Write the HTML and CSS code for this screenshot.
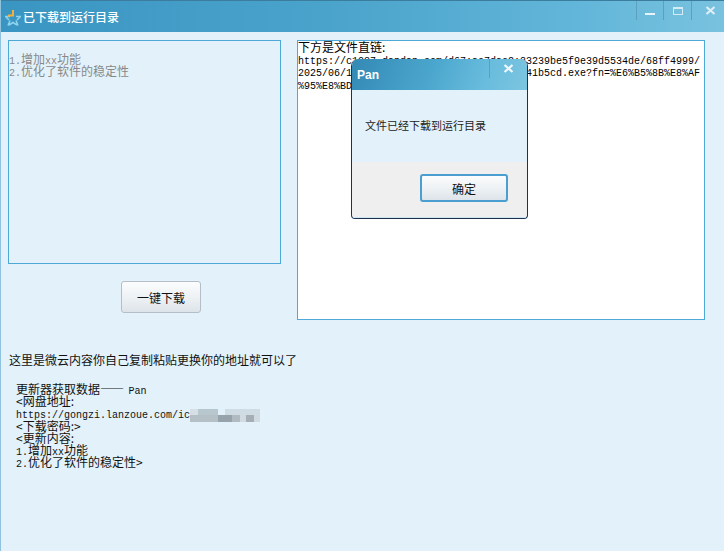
FILE: index.html
```html
<!DOCTYPE html>
<html lang="zh">
<head>
<meta charset="utf-8">
<title>已下载到运行目录</title>
<link rel="stylesheet" href="styles.css">
</head>
<body>
<div class="window">
  <header class="titlebar">
    <svg class="logo" width="18" height="18" viewBox="0 0 18 18">
      <path d="M1 7.500h5M12 7.500h5M4 16.500l2-5M14 16.500l-2-5M5 16l4-2.500 4 2.500M2 8l3 3M16 8l-3 3" fill="none" stroke="#8fd4ef" stroke-width="1.500"/>
      <path d="M9 1v5.500H4" fill="none" stroke="#f4b13a" stroke-width="2"/>
    </svg>
    <span class="title">已下载到运行目录</span>
    <div class="controls">
      <div class="ctl"><svg width="10" height="10" viewBox="0 0 10 10"><rect y="7" width="10" height="2" fill="#e8f4fa"/></svg></div>
      <div class="ctl"><svg width="10" height="8" viewBox="0 0 10 8"><rect x=".5" y=".5" width="9" height="7" fill="none" stroke="#d5ebf5"/><rect y="0" width="10" height="2" fill="#d5ebf5"/></svg></div>
      <div class="ctl ctl-close"><svg width="11" height="9" viewBox="0 0 11 9"><path d="M1.500 1l8 7M9.500 1l-8 7" stroke="#dfeef5" stroke-width="2.200"/></svg></div>
    </div>
  </header>
  <main class="content">
    <div class="top">
      <div class="left-col">
        <div class="box box-left">
          <div class="ln"><span class="a">1.</span>增加<span class="a">xx</span>功能</div>
          <div class="ln"><span class="a">2.</span>优化了软件的稳定性</div>
        </div>
        <button class="btn btn-main">一键下载</button>
      </div>
      <div class="box box-right">
        <div class="ln">下方是文件直链:</div>
        <div class="ln"><span class="a">https://c1037.dapdap.com/d67:ae7dac2:83239be5f9e39d5534de/68ff4999/</span></div>
        <div class="ln"><span class="a">2025/06/11/a1b2c3d4e5f6a7b8c9d0e1f2a3b41b5cd.exe?fn=%E6%B5%8B%E8%AF</span></div>
        <div class="ln"><span class="a">%95%E8%BD%BD</span></div>
      </div>
    </div>
    <p class="note">这里是微云内容你自己复制粘贴更换你的地址就可以了</p>
    <div class="log">
      <div class="ln">更新器获取数据<span class="dash">——</span><span class="a">Pan</span></div>
      <div class="ln">&lt;网盘地址:</div>
      <div class="ln"><span class="a">https://gongzi.lanzoue.com/ic</span><span class="blur"></span></div>
      <div class="ln">&lt;下载密码:&gt;</div>
      <div class="ln">&lt;更新内容:</div>
      <div class="ln"><span class="a">1.</span>增加<span class="a">xx</span>功能</div>
      <div class="ln"><span class="a">2.</span>优化了软件的稳定性&gt;</div>
    </div>
  </main>
  <section class="dialog">
    <header class="dlg-title">
      <span class="dlg-name">Pan</span>
      <div class="dlg-close"><svg width="11" height="9" viewBox="0 0 11 9"><path d="M1.500 1l8 7M9.500 1l-8 7" stroke="#eef8fc" stroke-width="2.200"/></svg></div>
    </header>
    <div class="dlg-body">文件已经下载到运行目录</div>
    <footer class="dlg-foot"><button class="btn btn-ok">确定</button></footer>
  </section>
</div>
</body>
</html>
```
FILE: styles.css
```css
* { box-sizing: border-box; }
html, body { margin: 0; height: 100%; }
body { width: 724px; height: 551px; overflow: hidden; font-family: "Noto Sans CJK SC", sans-serif; font-size: 12px; color: #111; }
.window { position: relative; width: 724px; height: 551px; background: #e3f2fa; border-left: 1px solid #8fc2dc; display: flex; flex-direction: column; overflow: hidden; }
.titlebar { height: 32px; flex: none; display: flex; align-items: center; padding-left: 3px; background: linear-gradient(90deg, #3a95c2 0%, #4aa3cb 45%, #62b6d9 80%, #79c2df 100%); border-top: 1px solid #3c7c9c; position: relative; }
.logo { flex: none; margin-top: 3px; margin-right: 1px; }
.title { color: #fff; font-size: 12px; font-weight: 500; }
.controls { position: absolute; top: 0; right: 0; display: flex; height: 19px; }
.ctl { height: 19px; border-left: 1px solid #5e9fbd; display: flex; align-items: center; justify-content: center; width: 27px; }
.ctl + .ctl { width: 28px; }
.ctl + .ctl + .ctl { width: 33px; padding-left: 5px; }
.content { flex: 1; position: relative; padding: 8px 18px 0 7px; }
.top { display: flex; gap: 16px; align-items: flex-start; }
.left-col { width: 273px; display: flex; flex-direction: column; align-items: flex-start; }
.box { border: 1px solid #4ea8d8; }
.box-left { width: 273px; height: 224px; padding-top: 12px; color: #888; }
.box-right { width: 408px; height: 280px; background: #fff; color: #000; }
.ln { height: 12.200px; line-height: 12.200px; white-space: nowrap; }
.a { font-family: "Liberation Mono", monospace; font-size: 10px; }
.dash { letter-spacing: 4.500px; }
.btn { font-family: inherit; font-size: 12px; color: #111; border-radius: 3px; padding: 0; background: linear-gradient(180deg, #fbfcfd 0%, #eef2f5 50%, #dde4e9 100%); }
.btn-main { width: 80px; height: 32px; margin: 17px 0 0 113px; border: 1px solid #b5bec6; }
.note { margin: 33px 0 0 1px; line-height: 14px; height: 14px; font-size: 12px; }
.log { margin: 16px 0 0 8px; }
.blur { display: inline-block; width: 71px; height: 13px; vertical-align: middle; filter: blur(.7px);
  background-image:
    linear-gradient(90deg, #d5dfe5 0 8px, #b8c6ce 8px 28px, transparent 28px 35px, #d0dce3 35px 70px, transparent 70px),
    linear-gradient(90deg, #b5c0c6 0 28px, #97a3aa 28px 42px, #b0bac0 42px 50px, #d0dae0 50px 56px, #a3aeb5 56px 64px, #d0dae0 64px 70px, transparent 70px);
  background-size: 100% 6px, 100% 7px;
  background-position: 0 0, 0 6px;
  background-repeat: no-repeat; }
.dialog { position: absolute; left: 350px; top: 59px; width: 177px; height: 160px; border: 1px solid #1c3350; border-top: 0; border-radius: 7px 7px 4px 4px; overflow: hidden; display: flex; flex-direction: column; background: #efefef; }
.dlg-title { height: 31px; flex: none; position: relative; display: flex; align-items: center; background: linear-gradient(110deg, #338ab5 0%, #4ba6cd 45%, #68bcdd 75%, #7cc5e0 100%); }
.dlg-name { color: #fff; font-family: "Liberation Sans", sans-serif; font-weight: 700; font-size: 12px; margin-left: 5px; }
.dlg-close { position: absolute; top: 0; right: 0; width: 38px; height: 19px; border-left: 1px solid #5e9fbd; display: flex; align-items: center; justify-content: center; }
.dlg-body { height: 72px; flex: none; background: #e3f2fa; padding: 28px 0 0 13px; line-height: 14px; font-size: 11px; color: #222; }
.dlg-foot { flex: 1; display: flex; justify-content: flex-end; padding: 12px 19px 0 0; border-bottom: 1px solid #cfe6f2; }
.btn-ok { width: 88px; height: 28px; border: 2px solid #4a9fd0; }
```
